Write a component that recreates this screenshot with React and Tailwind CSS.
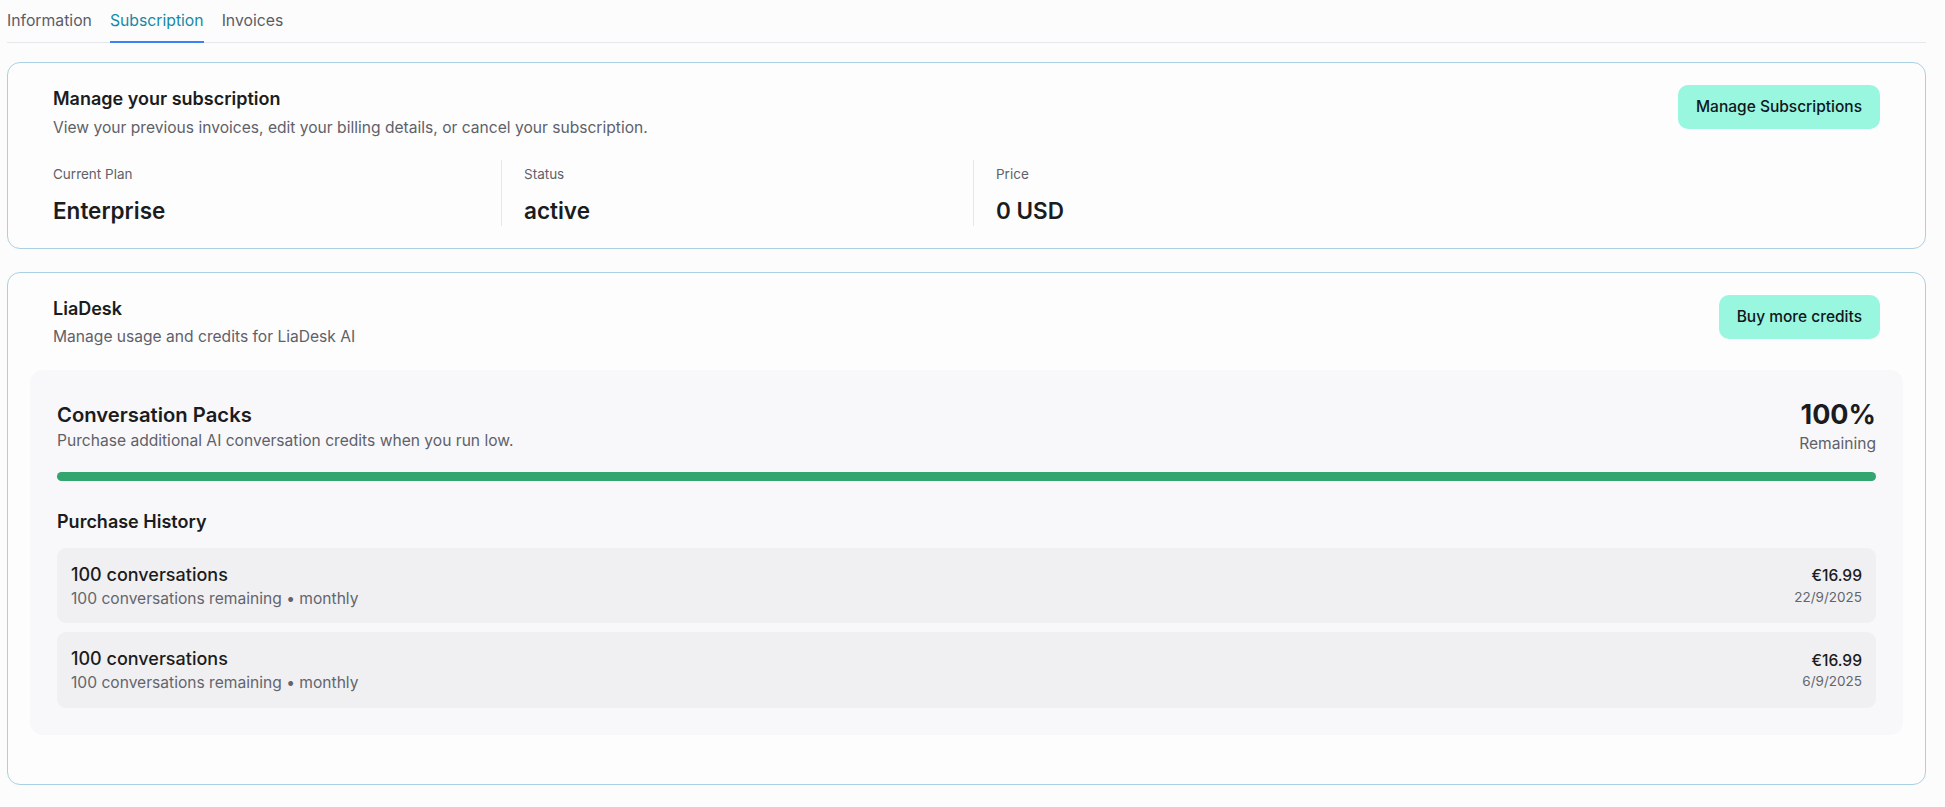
import React from "react";

const purchases = [
  { title: "100 conversations", detail: "100 conversations remaining • monthly", price: "€16.99", date: "22/9/2025" },
  { title: "100 conversations", detail: "100 conversations remaining • monthly", price: "€16.99", date: "6/9/2025" },
];

const Stat = ({ label, value, first }) => (
  <div
    className={
      first
        ? "w-[448px] flex flex-col"
        : "w-[472px] flex flex-col border-l border-[#e6e7ea] pl-[22px]"
    }
  >
    <span className="pt-[5px] text-[13.5px] leading-[18px] text-[#5f6169]">{label}</span>
    <span className="mt-[13px] text-[22.5px] leading-[30px] font-semibold text-[#1b1c20]">{value}</span>
  </div>
);

const App = () => {
  const remaining = 100;

  return (
    <div
      className="min-h-screen bg-[#fcfcfd] px-[7px] pr-[19px] text-[#1b1c20]"
      style={{ fontFamily: "Inter, 'Noto Sans', sans-serif" }}
    >
      {/* Tabs */}
      <div className="flex gap-[18px] border-b border-[#e6e7ea] text-[15.75px] leading-[22.5px]">
        <button className="pt-[10px] pb-[8px] -mb-px border-b-2 border-transparent text-[#5a5d66]">
          Information
        </button>
        <button className="pt-[10px] pb-[8px] -mb-px border-b-2 border-[#3b82f6] text-[#1689a6]">
          Subscription
        </button>
        <button className="pt-[10px] pb-[8px] -mb-px border-b-2 border-transparent text-[#5a5d66]">
          Invoices
        </button>
      </div>

      {/* Subscription card */}
      <div className="mt-[19px] rounded-[13px] border border-[#a9d0e3] bg-[#fdfdfe] p-[22px]">
        <div className="px-[23px]">
          <div className="flex items-start justify-between">
            <div>
              <h2 className="text-[18px] leading-[27px] font-semibold">Manage your subscription</h2>
              <p className="mt-[4px] text-[15.6px] leading-[24px] text-[#5f6169]">
                View your previous invoices, edit your billing details, or cancel your subscription.
              </p>
            </div>
            <button className="h-[44px] rounded-[10px] bg-[#99f6df] px-[18px] text-[15.5px] font-medium text-[#10151c]">
              Manage Subscriptions
            </button>
          </div>
          <div className="mt-[20px] flex">
            <Stat first label="Current Plan" value="Enterprise" />
            <Stat label="Status" value="active" />
            <Stat label="Price" value="0 USD" />
          </div>
        </div>
      </div>

      {/* LiaDesk card */}
      <div className="mt-[23px] rounded-[13px] border border-[#a9d0e3] bg-[#fdfdfe] p-[22px] pb-[49px]">
        <div className="flex items-start justify-between px-[23px]">
          <div>
            <h2 className="text-[18px] leading-[27px] font-semibold">LiaDesk</h2>
            <p className="mt-[3px] text-[15.6px] leading-[24px] text-[#5f6169]">Manage usage and credits for LiaDesk AI</p>
          </div>
          <button className="h-[44px] rounded-[10px] bg-[#99f6df] px-[18px] text-[15.5px] font-medium text-[#10151c]">
            Buy more credits
          </button>
        </div>

        <div className="mt-[21px] rounded-[13px] bg-[#f8f8fa] p-[27px]">
          <div className="flex items-center justify-between">
            <div>
              <h3 className="text-[20.25px] leading-[31.5px] font-semibold">Conversation Packs</h3>
              <p className="text-[15.6px] leading-[22.5px] text-[#5f6169]">
                Purchase additional AI conversation credits when you run low.
              </p>
            </div>
            <div className="text-right">
              <div className="text-[27px] leading-[36px] font-bold">{remaining}%</div>
              <div className="text-[15.6px] leading-[22.5px] text-[#5f6169]">Remaining</div>
            </div>
          </div>

          <div className="mt-[16.5px] h-[9px] w-full rounded-full bg-[#e4e6ea]">
            <div className="h-full rounded-full bg-[#33a56e]" style={{ width: `${remaining}%` }} />
          </div>

          <h4 className="mt-[27.5px] text-[18px] leading-[27px] font-semibold">Purchase History</h4>

          <div className="mt-[12.5px] flex flex-col gap-[9px]">
            {purchases.map((p, i) => (
              <div key={i} className="flex items-center justify-between rounded-[9px] bg-[#f0f0f2] px-[14px] py-[13px]">
                <div>
                  <div className="text-[18px] leading-[27px] font-medium">{p.title}</div>
                  <div className="text-[15.6px] leading-[22.5px] text-[#63656d]">{p.detail}</div>
                </div>
                <div className="text-right">
                  <div className="text-[15.6px] leading-[22.5px] font-medium">{p.price}</div>
                  <div className="text-[13.5px] leading-[18px] text-[#63656d]">{p.date}</div>
                </div>
              </div>
            ))}
          </div>
        </div>
      </div>
    </div>
  );
};

export default App;
